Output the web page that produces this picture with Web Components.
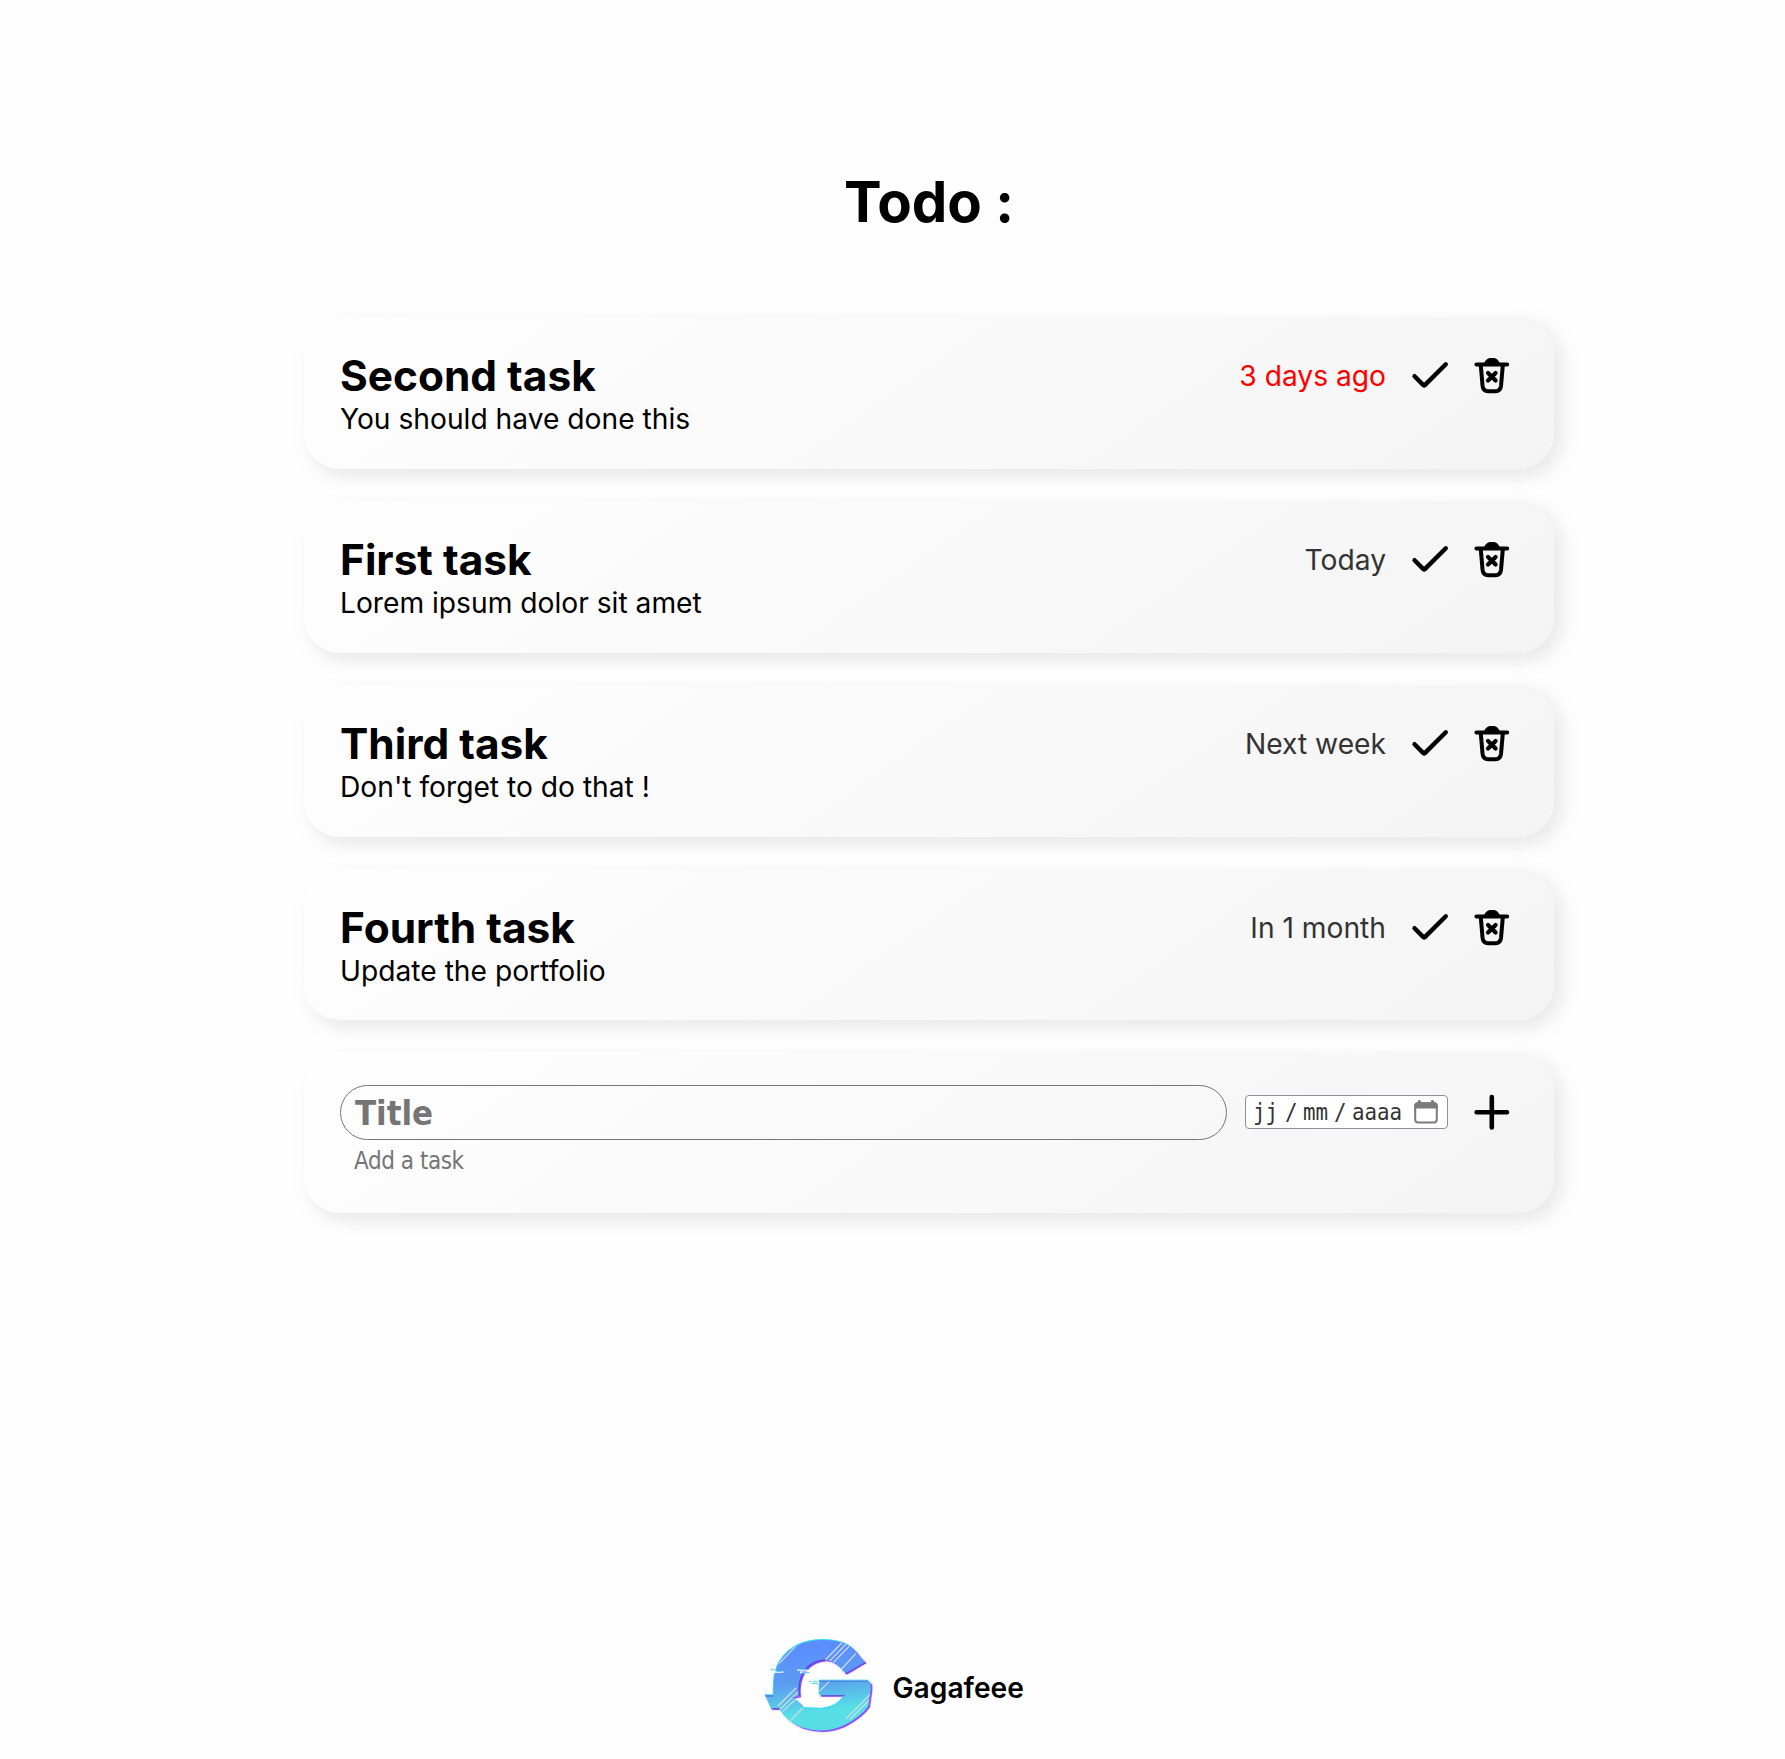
<!DOCTYPE html>
<html lang="en">
<head>
<meta charset="utf-8">
<title>Todo</title>
<style>
html,body{margin:0;background:#fefefe;color:#000;font-family:Inter,sans-serif}
</style>
</head>
<body>
<todo-app></todo-app>
<script>
const define=(name,html)=>customElements.define(name,class extends HTMLElement{
  constructor(){super();this.attachShadow({mode:'open'}).innerHTML=html;}
});

define('todo-card',`<style>
:host{display:block;box-sizing:border-box;height:151.75px;padding:32px 41px 0 36px;border-radius:36px;
background:linear-gradient(145deg,#fefefe,#f4f4f4);box-shadow:7px 7px 20px #e6e6e6,-7px -7px 20px #fff}
</style><slot></slot>`);

define('todo-icon',`<style>
:host{display:block;width:42px;height:42px;flex:none}
svg{display:none;width:42px;height:42px;fill:none;stroke:#000;stroke-width:4.4;stroke-linecap:round;stroke-linejoin:round}
:host([name=check]) .check,:host([name=trash]) .trash,:host([name=plus]) .plus{display:block}
</style>
<svg class="check" viewBox="0 0 42 42"><path d="M5.5 22.2 14.4 31.1Q15.1 31.8 15.8 31.1L36.8 10.3"/></svg>
<svg class="trash" viewBox="0 0 42 42"><path stroke-width="4" d="M5.4 10.5H36.2M9.8 11.5 11.6 32Q12.2 37.2 17 37.2H24.6Q29.4 37.2 30 32L31.8 11.5"/><path stroke="none" fill="#000" d="M12.5 10.5Q15 4 19 4H23Q27 4 29.2 10.5Z"/><path stroke-width="4.2" d="M17 19 24.6 26.6M24.6 19 17 26.6"/></svg>
<svg class="plus" viewBox="0 0 42 42"><path stroke-width="4.6" d="M5.6 21.3H36M20.8 6.1V36.5"/></svg>`);

define('todo-task',`<style>
:host{display:block}
.row{display:flex;align-items:center;height:52px}
.title{flex:1;font-weight:700;font-size:42.4px;line-height:52px;padding-top:2px;white-space:nowrap}
.date{font-size:28.2px;line-height:34px;margin-right:23px;padding-top:2px;color:#333}
:host([late]) .date{color:#f00}
todo-icon+todo-icon{margin-left:20px}
.desc{font-size:28.2px;line-height:36px}
</style><todo-card><div class="row"><div class="title"><slot name="title"></slot></div><div class="date"><slot name="date"></slot></div><todo-icon name="check"></todo-icon><todo-icon name="trash"></todo-icon></div><div class="desc"><slot></slot></div></todo-card>`);

define('todo-form',`<style>
:host{display:block}
todo-card{height:161px}
.row{display:flex;align-items:center;height:56px}
.title{box-sizing:border-box;width:887px;height:55px;border:1px solid #767676;border-radius:28px;padding-left:14px;
font:700 34.4px/55px "DejaVu Sans Condensed","DejaVu Sans",sans-serif;font-stretch:condensed;color:#757575}
.date{box-sizing:border-box;display:flex;align-items:center;margin-left:18px;width:203px;height:34px;border:1px solid #8f8f9d;border-radius:4px;background:#fff;
font:23px/32px "DejaVu Sans Mono",monospace;color:#333;padding-left:7px}
.date span{display:block;flex:none;width:25px;transform:scaleX(.905);transform-origin:left;white-space:nowrap}
.date .s{width:12.5px;margin:0 5.5px 0 6.5px}
.date .y{width:50px}
.date svg{margin-left:auto;margin-right:9px}
todo-icon{margin-left:23px}
.desc{margin:6px 0 0 14px;font:24px/30px "DejaVu Sans Condensed","DejaVu Sans",sans-serif;font-stretch:condensed;letter-spacing:-.45px;color:#757575}
</style><todo-card><div class="row"><div class="title">Title</div><div class="date"><span>jj</span><span class="s">/</span><span>mm</span><span class="s">/</span><span class="y">aaaa</span><svg width="24" height="24" viewBox="0 0 24 24"><rect x="1.2" y="3.2" width="21.6" height="19.2" rx="3" fill="none" stroke="#7b7b7b" stroke-width="2"/><path fill="#7b7b7b" d="M.3 8.5V5Q.3 2.3 4 2.3V1Q4 0 5.2 0T6.8 1V2.3H17V1Q17 0 18.4 0T20 1V2.3Q23.7 2.3 23.7 5V8.5Z"/></svg></div><todo-icon name="plus"></todo-icon></div><div class="desc">Add a task</div></todo-card>`);

define('glitch-logo',`<style>:host{display:block;width:140px;height:130px}svg{display:block}</style>
<svg width="140" height="130" viewBox="0 0 420 390">
<defs><linearGradient id="g" x1="0" y1="0" x2=".15" y2="1"><stop offset=".15" stop-color="#5b8fff"/><stop offset=".5" stop-color="#5b9bf0"/><stop offset=".85" stop-color="#57dfe5"/></linearGradient>
<path id="s" d="M344 126 328 108Q304 70 260 64Q220 56 180 64Q134 72 102 108Q72 142 71 190L70 226H46L64 266H88Q112 306 154 322Q220 344 282 316Q334 290 355 258L362 208V190L354 182H208V226H284Q264 262 218 266L160 264L148 248L126 232L148 228Q142 184 164 150Q190 122 224 120Q254 120 286 160Z"/>
<clipPath id="c"><use href="#s"/></clipPath></defs>
<use href="#s" fill="#e9e9f2" stroke="#ededf4" stroke-width="9" transform="translate(3 3)"/>
<use href="#s" fill="#8e4dff" transform="translate(5 4)"/>
<use href="#s" fill="#35dff5" transform="translate(-2 -3)"/>
<use href="#s" fill="url(#g)"/>
<g clip-path="url(#c)" fill="none" stroke="#d9dce8" stroke-width="3.5">
<path d="M88 130 140 76M226 120 278 66M238 124 290 70M248 130 300 76M272 150 318 100M84 258 138 204M90 268 146 214M98 274 150 226M122 302 158 264M208 214 240 182M288 296 362 222M300 298 362 236"/></g>
<path d="M226 120Q186 122 164 150Q142 184 148 228" fill="none" stroke="#6042df" stroke-width="4"/>
<path d="M208 183H354M284 227H216M46 228H70M64 266H88M286 161 348 128" fill="none" stroke="#6651d5" stroke-width="3"/>
<path d="M208 181H354M160 266H218Q264 262 284 230" fill="none" stroke="#4bd9e9" stroke-width="2"/>
<path d="M56 150H74M66 156H100M142 150H172M150 157H184M174 182H206M180 189H208" fill="none" stroke="#fff" stroke-width="5"/>
<path d="M62 149H72M80 154H96M146 148H176M156 158H178M178 184H184M190 184H202M184 190H204" fill="none" stroke="#43c9e8" stroke-width="3"/>
</svg>`);

define('todo-footer',`<style>:host{display:flex;align-items:center;height:130px;padding-left:750px}
span{margin-left:2.5px;padding-top:6px;font-weight:600;font-size:28.2px;line-height:34px}</style><glitch-logo></glitch-logo><span><slot></slot></span>`);

define('todo-app',`<style>
:host{display:flex;flex-direction:column;box-sizing:border-box;height:1759px;width:1785px}
main{flex:1;width:1250px;margin-left:304px;display:flex;flex-direction:column}
h1{margin:168px 0 81.3px;font-size:56.4px;line-height:68px;font-weight:700;text-align:center}
.list{display:flex;flex-direction:column;gap:32px}
todo-footer{margin-bottom:9px}
</style>
<main><h1>Todo :</h1><div class="list">
<todo-task late><span slot="title">Second task</span><span slot="date">3 days ago</span>You should have done this</todo-task>
<todo-task><span slot="title">First task</span><span slot="date">Today</span>Lorem ipsum dolor sit amet</todo-task>
<todo-task><span slot="title">Third task</span><span slot="date">Next week</span>Don't forget to do that !</todo-task>
<todo-task><span slot="title">Fourth task</span><span slot="date">In 1 month</span>Update the portfolio</todo-task>
<todo-form></todo-form></div></main>
<todo-footer>Gagafeee</todo-footer>`);
</script>
</body>
</html>
